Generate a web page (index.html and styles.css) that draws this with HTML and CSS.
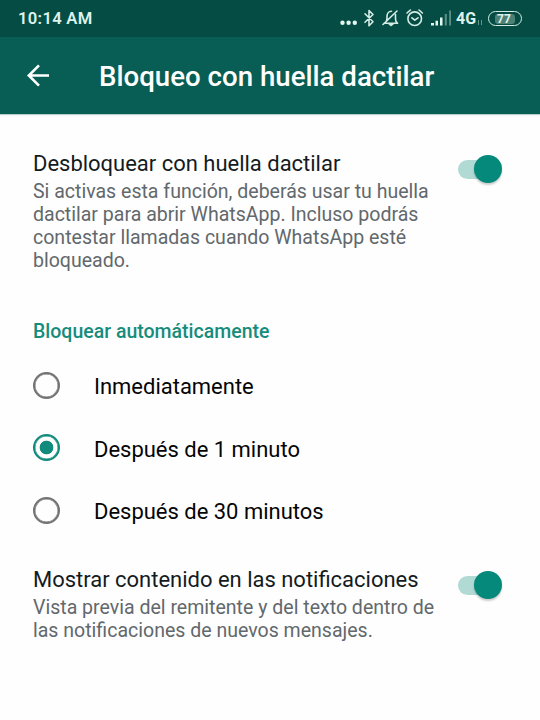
FILE: index.html
```html
<!DOCTYPE html>
<html lang="es">
<head>
<meta charset="utf-8">
<title>Bloqueo con huella dactilar</title>
<link rel="stylesheet" href="styles.css">
</head>
<body>
<div class="status">
  <span class="time">10:14 AM</span>
  <svg class="status-icons" width="116" height="26" viewBox="0 0 116 26" fill="none" stroke="#d5ece5" stroke-width="1.6" stroke-linecap="round" stroke-linejoin="round">
    <g fill="#e4f5ef" stroke="none"><circle cx="2.500" cy="16.800" r="2.200"/><circle cx="8.600" cy="16.800" r="2.200"/><circle cx="14.800" cy="16.800" r="2.200"/></g>
    <path d="M25 7.800l8 8L29 19.800V4.500l4 4L25 16.300"/>
    <path d="M44 17.200h13.500M46.500 14.500c.4-1 .5-2 .5-3V10.500c0-3 1.800-5.200 4.500-5.200M55.500 8.500V13c0 2 .5 3.200 2 4.200M57 5L43 18.500"/>
    <path d="M49 18h4.500l-2.200 1.800z" fill="#d5ece5" stroke-width="1"/>
    <circle cx="74.700" cy="12.700" r="6.800"/><path d="M71.900 11.800l2.900 2.400 3.200-2.400M67 7l3.400-3M82.400 7L79 4"/>
    <g stroke="none" fill="#e4f5ef"><path d="M91 17h3v2.500h-3zM95.500 14.700H98v4.800h-2.500zM100 11.500h2.500v8H100z"/><path opacity=".4" d="M104.800 8h2v11.500h-2zM109.200 4.500h1.800v15h-1.800z"/></g>
  </svg>
  <span class="net">4G</span>
  <svg class="data" width="6" height="7" viewBox="0 0 6 7" fill="none" stroke="#629589"><path d="M1.500 1v5M4.500 1v5"/></svg>
  <span class="battery"><span>77</span></span>
</div>
<header class="bar">
  <svg width="24" height="24" viewBox="0 0 24 24" fill="none" stroke="#fff" stroke-width="2.600"><path d="M23 11.500H3.500M13 1.300L2.800 11.500l10.200 10.200"/></svg>
  <h1>Bloqueo con huella dactilar</h1>
</header>
<main>
  <section class="setting">
    <div>
      <h2>Desbloquear con huella dactilar</h2>
      <p>Si activas esta función, deberás usar tu huella<br>dactilar para abrir WhatsApp. Incluso podrás<br>contestar llamadas cuando WhatsApp esté<br>bloqueado.</p>
    </div>
    <span class="switch"><i></i></span>
  </section>
  <h3>Bloquear automáticamente</h3>
  <div class="option"><span class="radio"></span><span>Inmediatamente</span></div>
  <div class="option"><span class="radio on"></span><span>Después de 1 minuto</span></div>
  <div class="option"><span class="radio"></span><span>Después de 30 minutos</span></div>
  <section class="setting second">
    <div>
      <h2>Mostrar contenido en las notificaciones</h2>
      <p>Vista previa del remitente y del texto dentro de<br>las notificaciones de nuevos mensajes.</p>
    </div>
    <span class="switch"><i></i></span>
  </section>
</main>
</body>
</html>
```

FILE: styles.css
```css
* { box-sizing: border-box; }
body { margin: 0; width: 540px; height: 720px; overflow: hidden; background: #fefefe; font-family: Roboto, sans-serif; }
h1, h2, h3, p { margin: 0; font-weight: 400; white-space: nowrap; }
.status { height: 37px; background: #054d44; display: flex; align-items: center; padding-left: 18px; color: #dff2ec; }
.time { width: 322px; font-size: 16.6px; font-weight: 600; letter-spacing: .3px; }
.status-icons { flex: none; }
.net { font-size: 16px; font-weight: 700; width: 21px; }
.data { margin-top: 7px; }
.battery { margin-left: 5px; width: 34px; height: 15px; border: 1.5px solid #d5ece5; border-radius: 8px; display: flex; justify-content: center; align-items: center; font-size: 12px; font-weight: 700; }
.battery span { background: #4d8075; height: 10px; line-height: 10px; width: 20px; border-radius: 3px; padding-left: 2px; }
.bar { height: 77px; background: #085e54; color: #fff; display: flex; align-items: center; padding-left: 26px; box-shadow: 0 1px 1px #b9d2cd; }
.bar h1 { margin-left: 49px; font-size: 27.65px; font-weight: 500; line-height: 32px; padding-top: 2px; }
main { padding: 36px 38px 0 33px; }
.setting { display: flex; justify-content: space-between; }
.setting h2 { font-size: 21.98px; line-height: 28px; color: #141b1e; }
.setting p { margin-top: 2px; font-size: 19.54px; line-height: 23px; color: #62686c; }
.switch { position: relative; width: 44px; height: 28px; margin-top: 5px; display: flex; justify-content: flex-end; }
.switch::before { content: ""; position: absolute; left: 0; top: 5px; width: 36px; height: 19px; border-radius: 10px; background: #b0dad3; }
.switch i { position: relative; width: 28px; height: 28px; border-radius: 50%; background: #05897a; box-shadow: 0 2px 2px #0003; }
h3 { font-size: 19.5px; font-weight: 500; line-height: 24px; color: #168c7c; margin-top: 48px; margin-bottom: 11px; }
.option { height: 62.5px; display: flex; align-items: center; font-size: 21.98px; color: #050505; gap: 34px; line-height: 28px; padding-top: 2px; }
.radio { width: 27px; height: 27px; border: 2.5px solid #737373; border-radius: 50%; flex: none; margin-top: -4px; box-shadow: inset 0 0 0 .5px #737373; }
.radio.on { border-color: #118b7b; background: radial-gradient(circle, #118b7b 6.5px, transparent 7.2px); box-shadow: inset 0 0 0 .5px #118b7b; }
.second { margin-top: 23.5px; }
```
